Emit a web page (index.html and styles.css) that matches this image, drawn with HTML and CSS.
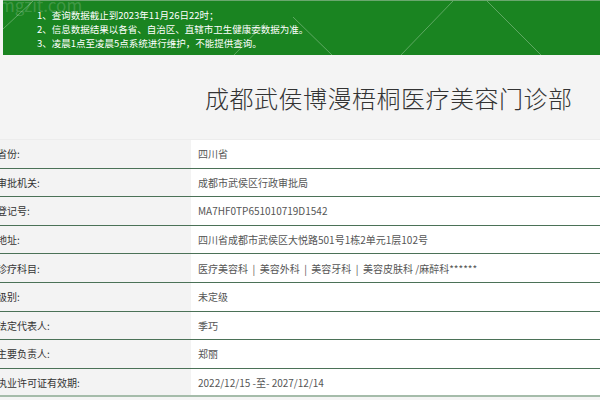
FILE: index.html
```html
<!DOCTYPE html>
<html lang="zh-CN">
  <head>
    <meta charset="UTF-8" />
    <meta name="viewport" content="width=device-width, initial-scale=1.0" />
    <title>成都武侯博漫梧桐医疗美容门诊部</title>
    <link rel="stylesheet" href="styles.css">
  </head>

  <body>
    <div class="notice">
      <svg class="notice-lines" width="597" height="55" viewBox="0 0 597 55">
        <line x1="450" y1="0" x2="397" y2="55" />
        <line x1="484" y1="0" x2="539" y2="55" />
        <line x1="290" y1="16" x2="330" y2="55" />
        <line x1="0" y1="28" x2="30" y2="0" />
        <line x1="230" y1="55" x2="262" y2="22" />
      </svg>
      <span class="watermark">mgzit.com</span>
      <p>1、查询数据截止到2023年11月26日22时；</p>
      <p>2、信息数据结果以各省、自治区、直辖市卫生健康委数据为准。</p>
      <p>3、凌晨1点至凌晨5点系统进行维护，不能提供查询。</p>
    </div>

    <div class="head">
      <h1>成都武侯博漫梧桐医疗美容门诊部</h1>
    </div>

    <div class="info">
      <div class="row"><div class="label">省份:</div><div class="value">四川省</div></div>
      <div class="row"><div class="label">审批机关:</div><div class="value">成都市武侯区行政审批局</div></div>
      <div class="row"><div class="label">登记号:</div><div class="value">MA7HF0TP651010719D1542</div></div>
      <div class="row"><div class="label">地址:</div><div class="value">四川省成都市武侯区大悦路501号1栋2单元1层102号</div></div>
      <div class="row"><div class="label">诊疗科目:</div><div class="value">医疗美容科 &nbsp;|&nbsp; 美容外科 &nbsp;|&nbsp; 美容牙科 &nbsp;|&nbsp; 美容皮肤科 /麻醉科******</div></div>
      <div class="row"><div class="label">级别:</div><div class="value">未定级</div></div>
      <div class="row"><div class="label">法定代表人:</div><div class="value">季巧</div></div>
      <div class="row"><div class="label">主要负责人:</div><div class="value">郑丽</div></div>
      <div class="row"><div class="label">执业许可证有效期:</div><div class="value">2022/12/15 -至- 2027/12/14</div></div>
    </div>
  </body>
</html>
```

FILE: styles.css
```css
body {
  margin: 0;
  padding: 0;
  font-family: "Noto Sans CJK SC", "Noto Sans", sans-serif;
  background-color: #f4f4f4;
  color: #333;
  overflow: hidden;
}

.notice {
  position: relative;
  margin-left: 3px;
  height: 55px;
  box-sizing: border-box;
  padding: 7px 0 0 34px;
  background-color: #1a8421;
  border-top: 1px solid #6aa76e;
  color: #fff;
  font-size: 9.5px;
  overflow: hidden;
}

.notice p {
  position: relative;
  margin: 0;
  line-height: 14px;
}

.notice-lines {
  position: absolute;
  left: 0;
  top: 0;
}

.notice-lines line {
  stroke: #5ea862;
  stroke-width: 1;
}

.watermark {
  position: absolute;
  left: -4px;
  top: -9px;
  font-size: 17px;
  color: rgba(255, 255, 255, 0.18);
}

.head {
  height: 85px;
  box-sizing: border-box;
  padding-left: 205px;
  border-bottom: 1px solid #ececec;
  display: flex;
  align-items: center;
}

.head h1 {
  margin: 0;
  font-size: 24px;
  font-weight: 300;
  letter-spacing: 0.5px;
  white-space: nowrap;
  color: #333;
}

.row {
  display: grid;
  grid-template-columns: 191px 1fr;
  height: 28.6px;
  box-sizing: border-box;
  border-bottom: 1px solid #4b7157;
  font-size: 10px;
}

.row:last-child {
  border-bottom: 2px solid #a5bcaa;
}

.label {
  display: flex;
  align-items: center;
  margin-left: -3px;
  background-color: #f3f3f3;
  white-space: nowrap;
}

.value {
  display: flex;
  align-items: center;
  padding-left: 7px;
  background-color: #fff;
  color: #555;
  white-space: nowrap;
}
```
